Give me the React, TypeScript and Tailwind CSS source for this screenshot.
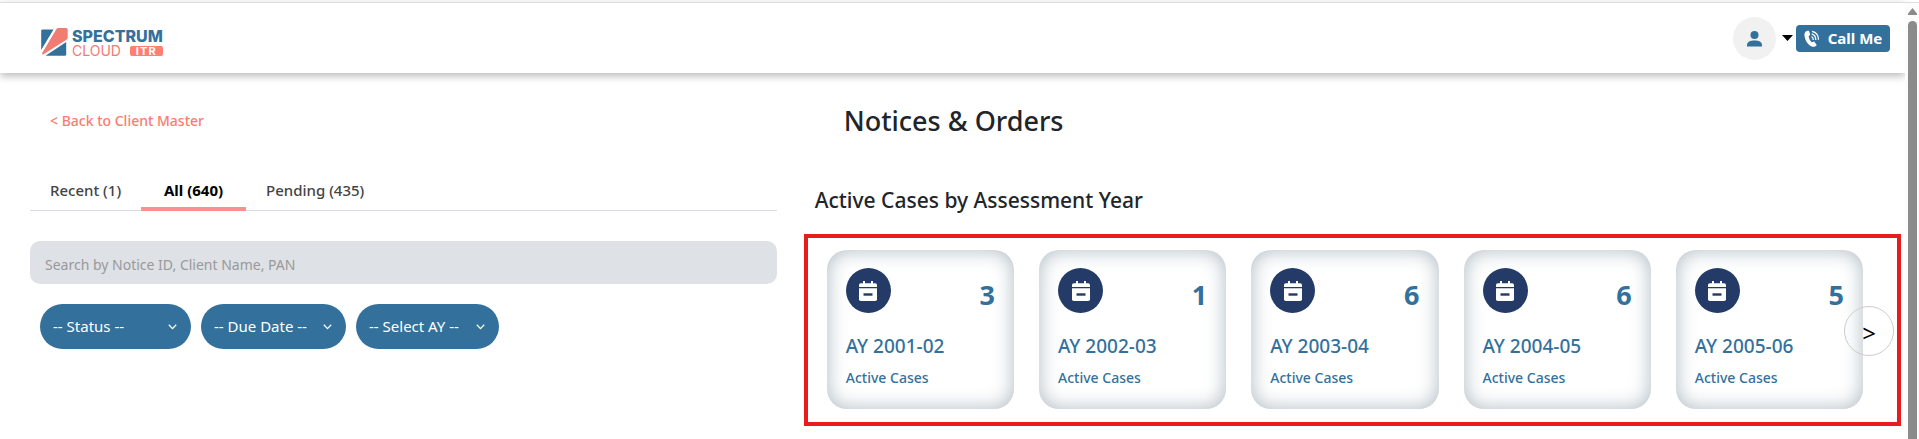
import { useState } from "react"

const cases = [
  { year: "AY 2001-02", count: 3 },
  { year: "AY 2002-03", count: 1 },
  { year: "AY 2003-04", count: 6 },
  { year: "AY 2004-05", count: 6 },
  { year: "AY 2005-06", count: 5 },
]

const tabs = ["Recent (1)", "All (640)", "Pending (435)"]

const filters = [
  { id: "status", label: "-- Status --", width: "w-[151px]" },
  { id: "due", label: "-- Due Date --", width: "w-[145px]" },
  { id: "ay", label: "-- Select AY --", width: "w-[143px]" },
]

function Logo() {
  return (
    <a href="#" className="flex items-center gap-1 pt-2 font-[Inter,sans-serif]">
      <svg width="27" height="28" viewBox="0 0 27 28">
        <path d="M1.500 1.500H12.500L.2 22V2.800Q.2 1.500 1.500 1.500Z" fill="#33719c" />
        <path d="M17 0H25Q26.700 0 26.700 1.700V9.500Q26.700 10.700 25.700 11.400L2.200 26.600Q.6 26.600 1.200 25L15.300 1.200Q16 0 17 0Z" fill="#f27b72" />
        <path d="M25.200 14V26.300Q25.200 27.800 23.700 27.800H4.500Z" fill="#33719c" />
      </svg>
      <span className="flex flex-col pt-0.5">
        <span className="text-base leading-[15px] font-extrabold text-[#33719c]">SPECTRUM</span>
        <span className="flex items-center justify-between text-sm leading-[14px] text-[#f27b72]">
          CLOUD
          <span className="w-[33px] rounded-xs bg-[#ff7f73] text-center text-[11px] leading-[10px] font-bold tracking-widest text-white">ITR</span>
        </span>
      </span>
    </a>
  )
}

function Header() {
  return (
    <header className="flex h-[71px] items-center justify-between border-t border-[#dedede] pr-[15px] pl-[41px] shadow-[0_3px_8px_rgba(0,0,0,0.28)]">
      <Logo />
      <div className="flex items-center">
        <button aria-label="Account" className="flex items-center gap-[6px]">
          <span className="flex size-[43px] items-center justify-center rounded-full bg-[#f1f1f1]">
            <svg className="mt-0.5" width="15" height="16" viewBox="0 0 15 16" fill="#33719c">
              <circle cx="7.500" cy="4" r="4" />
              <path d="M0 15.500V14.200C0 11 3.300 9.600 7.500 9.600S15 11 15 14.200V15.500Z" />
            </svg>
          </span>
          <svg width="11" height="6" viewBox="0 0 11 6">
            <path d="M0 0H11L5.500 6Z" />
          </svg>
        </button>
        <button className="ml-[3px] flex h-[27px] w-[94px] items-center justify-center gap-2 rounded bg-[#33719c] text-[15px] font-bold text-white">
          <svg width="16" height="17" viewBox="0 0 16 17" fill="none" stroke="#fff">
            <path d="M3.300.8C1.300 1.400.2 3 .5 5.500C1 10.500 4 15.200 8.300 16.700C10.300 17.200 12 16.300 12.700 15L10.200 11.500L7.800 12.200C6 10.800 4.900 8.500 4.700 6.200L6.200 4.700L5 .8Z" fill="#fff" stroke="none" />
            <path d="M7.500 6.500Q9.300 7.500 9.300 10M7.700 3.900Q11.800 5 11.800 10M8 1.300Q14.500 2.500 14.500 9.800" strokeWidth="1.300" />
          </svg>
          Call Me
        </button>
      </div>
    </header>
  )
}

function Filter({ id, label, width }: { id: string; label: string; width: string }) {
  return (
    <div className={`grid items-center ${width}`}>
      <select id={id} aria-label={label} className="col-start-1 row-start-1 h-[45px] appearance-none rounded-full bg-[#33719c] pl-[13px] text-[15px] text-white">
        <option>{label}</option>
      </select>
      <svg className="pointer-events-none col-start-1 row-start-1 mr-[14px] justify-self-end" width="9" height="6" viewBox="0 0 9 6" fill="none" stroke="#fff" strokeWidth="1.300">
        <path d="M.8.800L4.500 4.600L8.200.800" />
      </svg>
    </div>
  )
}

function CaseCard({ year, count }: { year: string; count: number }) {
  return (
    <article className="flex-1 rounded-[20px] px-[19px] pt-[18px] pb-[19px] text-[#33719c] shadow-[inset_0_0_20px_rgba(51,80,100,0.4)]">
      <div className="flex h-[54px] items-start justify-between">
        <span className="flex size-[45px] items-center justify-center rounded-full bg-[#233b66]">
          <svg width="18" height="20" viewBox="0 0 18 20">
            <path d="M0 6V4Q0 2.300 1.800 2.300H4V0H6V2.300H12V0H14V2.300H16.200Q18 2.300 18 4V6Z" fill="#fff" />
            <path d="M0 7.200H18V18.200Q18 20 16.200 20H1.800Q0 20 0 18.200Z" fill="#fff" />
            <rect x="4.500" y="12.300" width="9" height="2.400" fill="#233b66" />
          </svg>
        </span>
        <strong className="self-end text-[27px] leading-[54px] font-bold">{count}</strong>
      </div>
      <h3 className="mt-3 text-[19px] leading-[24px] font-medium">{year}</h3>
      <p className="mt-2 text-sm leading-6 font-medium">Active Cases</p>
    </article>
  )
}

function App() {
  const [active, setActive] = useState(1)

  return (
    <div className="flex min-h-screen bg-white pt-[2px] font-['Noto_Sans',sans-serif] text-[#212529]">
      <div className="min-w-0 flex-1">
        <Header />
        <main className="flex">
          <section className="w-5/12 pr-[17px] pl-[30px]">
            <a href="#" className="mt-9 ml-5 block text-sm leading-6 font-medium text-[#fa7c70]">&lt; Back to Client Master</a>
            <div className="mt-[38px] flex border-b border-[#dcdde4]">
              {tabs.map((tab, i) => (
                <button
                  key={tab}
                  onClick={() => setActive(i)}
                  className={`-mb-px h-[40px] min-w-[105px] border-b-4 px-5 pt-0.5 text-[15px] whitespace-nowrap ${i === active ? "border-[#ff8f8f] font-bold text-black" : "border-transparent font-medium text-[#444]"}`}
                >
                  {tab}
                </button>
              ))}
            </div>
            <input
              type="text"
              aria-label="Search"
              placeholder="Search by Notice ID, Client Name, PAN"
              className="mt-[30px] h-[43px] w-full rounded-[10px] bg-[#dee1e5] px-[15px] pt-1 text-sm placeholder:text-[#999]"
            />
            <div className="mt-5 ml-[10px] flex gap-[10px]">
              {filters.map((f) => (
                <Filter key={f.id} {...f} />
              ))}
            </div>
          </section>

          <section className="w-7/12 pr-1 pl-[10px]">
            <h1 className="mt-[31px] ml-10 text-[27px] leading-[34px] font-medium">Notices &amp; Orders</h1>
            <h2 className="mt-[49px] ml-[11px] text-[21px] leading-[26px] font-medium">Active Cases by Assessment Year</h2>
            <div className="relative mt-[21px] flex gap-[25px] border-4 border-[#e81c1c] pt-3 pr-[34px] pb-[13px] pl-[19px]">
              {cases.map((c) => (
                <CaseCard key={c.year} {...c} />
              ))}
              <button aria-label="Next" className="absolute top-[68px] right-[3px] size-[50px] rounded-full border border-[#ccc] pt-1 text-2xl leading-none text-black">
                &gt;
              </button>
            </div>
          </section>
        </main>
      </div>

      {/* scrollbar */}
      <div className="flex w-[14px] flex-col items-center border-t border-[#dedede] bg-[#fcfcfc] pt-[5px]">
        <svg width="9" height="7" viewBox="0 0 9 7" fill="#8b8b8b">
          <path d="M4.500 0L9 5.500V7H0V5.500Z" />
        </svg>
        <div className="mt-[6px] w-[9px] flex-1 rounded-t-full bg-[#8b8b8b]" />
      </div>
    </div>
  )
}

export default App
